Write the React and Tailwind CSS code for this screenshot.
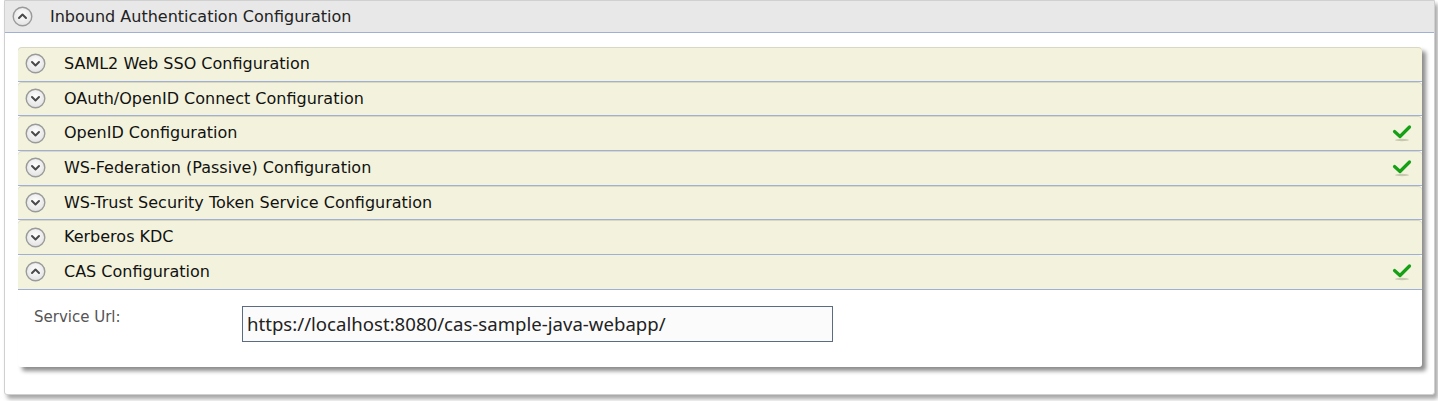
import { useState } from 'react';

const CircleIcon = ({ up }) => (
    <svg width="21" height="21" viewBox="0 0 21 21" className="shrink-0">
        <defs>
            <radialGradient id={up ? 'gu' : 'gd'} cx="50%" cy="40%" r="60%">
                <stop offset="0%" stopColor="#ffffff" />
                <stop offset="100%" stopColor="#e2e2e2" />
            </radialGradient>
        </defs>
        <circle cx="10.5" cy="10.5" r="9.3" fill={`url(#${up ? 'gu' : 'gd'})`} stroke="#9a9a9a" strokeWidth="1.4" />
        {up ? (
            <path d="M7 12 L10.5 8.5 L14 12" fill="none" stroke="#4a4a4a" strokeWidth="2" strokeLinecap="round" strokeLinejoin="round" />
        ) : (
            <path d="M7 9 L10.5 12.5 L14 9" fill="none" stroke="#4a4a4a" strokeWidth="2" strokeLinecap="round" strokeLinejoin="round" />
        )}
    </svg>
);

const Check = () => (
    <svg width="20" height="18" viewBox="0 0 20 18" className="shrink-0">
        <ellipse cx="10" cy="16" rx="7" ry="1.2" fill="#c8c8b0" />
        <path d="M2.5 7.5 L8 12.5 L17.5 3" fill="none" stroke="#16a016" strokeWidth="3.2" strokeLinecap="round" strokeLinejoin="round" />
    </svg>
);

const secoes = [
    { titulo: 'SAML2 Web SSO Configuration', ok: false },
    { titulo: 'OAuth/OpenID Connect Configuration', ok: false },
    { titulo: 'OpenID Configuration', ok: true },
    { titulo: 'WS-Federation (Passive) Configuration', ok: true },
    { titulo: 'WS-Trust Security Token Service Configuration', ok: false },
    { titulo: 'Kerberos KDC', ok: false },
]

export default function App() {
    const [serviceUrl, setServiceUrl] = useState('https://localhost:8080/cas-sample-java-webapp/');

    return (
        <div className="w-[1438px] h-[401px] bg-white font-['DejaVu_Sans',sans-serif]">
            <div className="ml-[4px] w-[1431px] h-[395px] border border-[#d0d0d0] rounded-b-[3px] bg-white shadow-[3px_4px_4px_rgba(0,0,0,0.35)]">
                <div className="flex items-center h-[32px] bg-[#e8e8e8] border-b border-[#9fb0d4] pl-[7px]">
                    <CircleIcon up />
                    <span className="ml-[17px] text-[16px] text-[#222]">Inbound Authentication Configuration</span>
                </div>
                <div className="pl-[13px] pt-[14px]">
                    <div className="w-[1404px] rounded-[3px] shadow-[4px_4px_4px_rgba(0,0,0,0.45)] bg-white">
                        {secoes.map((s, i) => (
                            <div key={i} className="flex items-center h-[34.7px] bg-[#f3f3dd] border-b border-[#9fb0d4] rounded-t-[4px] pl-[7px] pr-[10px] shadow-[inset_0_1px_0_#d8d8c4]">
                                <CircleIcon />
                                <span className="ml-[18px] text-[16px] text-[#111]">{s.titulo}</span>
                                <div className="flex-1" />
                                {s.ok && <Check />}
                            </div>
                        ))}
                        <div className="flex items-center h-[34.7px] bg-[#f3f3dd] border-b border-[#9fb0d4] rounded-t-[4px] pl-[7px] pr-[10px]">
                            <CircleIcon up />
                            <span className="ml-[18px] text-[16px] text-[#111]">CAS Configuration</span>
                            <div className="flex-1" />
                            <Check />
                        </div>
                        <div className="flex items-start h-[77px] pt-[16px] pl-[16px]">
                            <label className="w-[208px] text-[15px] text-[#555]">Service Url:</label>
                            <input
                                value={serviceUrl}
                                onChange={(e) => setServiceUrl(e.target.value)}
                                className="w-[591px] h-[36px] border border-[#5b6b82] bg-[#fbfbfb] px-[4px] text-[18.6px] text-[#222] font-['Noto_Sans',sans-serif] outline-none"
                            />
                        </div>
                    </div>
                </div>
            </div>
        </div>
    )
}
